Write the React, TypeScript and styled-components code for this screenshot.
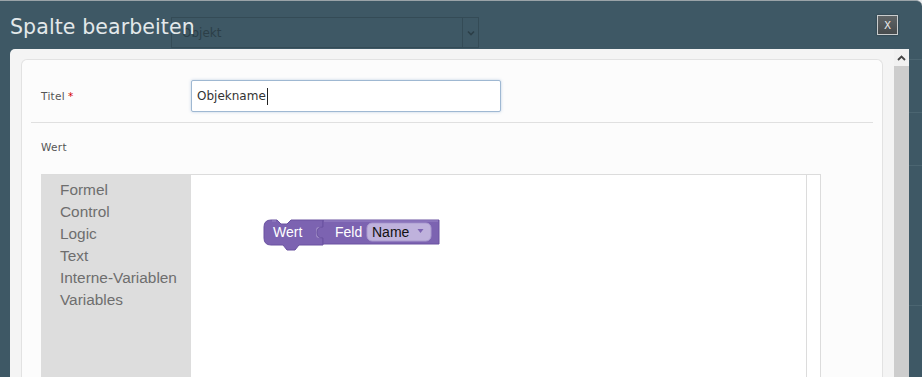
import React from "react";
import styled, { createGlobalStyle } from "styled-components";

const Global = createGlobalStyle`
  html, body { margin: 0; padding: 0; background: #e9ecee; overflow: hidden; }
  #root { width: 922px; height: 377px; }
`;

const Dialog = styled.div`
  width: 922px;
  height: 377px;
  box-sizing: border-box;
  background: #3e5865;
  border-top: 1px solid #9aa3a8;
  border-top-right-radius: 6px;
  display: flex;
  flex-direction: column;
  overflow: hidden;
`;

const Header = styled.div`
  position: relative;
  height: 48px;
  flex: none;
  display: flex;
  align-items: flex-start;
  justify-content: space-between;
  padding: 0 24px 0 10px;
`;

const Title = styled.h1`
  margin: 12px 0 0 0;
  font-family: "DejaVu Sans", sans-serif;
  font-weight: normal;
  font-size: 20.5px;
  letter-spacing: 0.1px;
  color: #e3e8ea;
  line-height: 28px;
  position: relative;
  z-index: 1;
`;

const GhostSelect = styled.div`
  position: absolute;
  left: 171px;
  top: 16px;
  width: 308px;
  height: 31px;
  box-sizing: border-box;
  border: 1px solid #344b56;
  display: flex;
  align-items: center;
  font-family: "DejaVu Sans", sans-serif;
  font-size: 12px;
  color: #2c3f48;
`;

const GhostText = styled.span`
  flex: 1;
  padding-left: 10px;
`;

const GhostArrow = styled.span`
  width: 15px;
  align-self: stretch;
  border-left: 1px solid #344b56;
  display: flex;
  align-items: center;
  justify-content: center;
`;

const CloseBtn = styled.button`
  margin-top: 14px;
  width: 21px;
  height: 20px;
  box-sizing: border-box;
  padding: 0;
  border: 1px solid #c9cccd;
  background: linear-gradient(#5f6466, #474b4d);
  color: #e8e8e8;
  font-family: "DejaVu Sans Mono", monospace;
  font-size: 11px;
  line-height: 17px;
  text-align: center;
  box-shadow: 0 0 2px rgba(0, 0, 0, 0.4);
`;

const Body = styled.div`
  flex: 1;
  display: flex;
  min-height: 0;
`;

const Panel = styled.div`
  flex: 1;
  margin-left: 10px;
  background: #f4f4f4;
  border-top-left-radius: 5px;
  padding: 10px 11px 0 11px;
  display: flex;
  min-height: 0;
`;

const Card = styled.div`
  flex: 1;
  background: #fcfcfc;
  border: 1px solid #e2e2e2;
  border-bottom: none;
  border-radius: 6px 6px 0 0;
  display: flex;
  flex-direction: column;
  min-height: 0;
`;

const FormRow = styled.div`
  display: flex;
  align-items: center;
  padding: 20px 0 10px 19px;
`;

const Label = styled.label`
  width: 150px;
  font-family: "DejaVu Sans", sans-serif;
  font-size: 10.5px;
  color: #555;
  letter-spacing: 0.3px;
`;

const Req = styled.span`
  color: #d40000;
  margin-left: 3px;
`;

const FakeInput = styled.div`
  width: 310px;
  height: 32px;
  box-sizing: border-box;
  border: 1px solid #9fb8d2;
  border-radius: 2px;
  background: #fff;
  box-shadow: 0 0 3px rgba(110, 150, 200, 0.45);
  display: flex;
  align-items: center;
  padding-left: 5px;
  font-family: "DejaVu Sans", sans-serif;
  font-size: 12px;
  color: #333;
`;

const Caret = styled.span`
  display: inline-block;
  width: 1px;
  height: 17px;
  background: #222;
  margin-left: 1px;
`;

const Divider = styled.div`
  height: 1px;
  background: #e0e0e0;
  margin: 0 9px;
`;

const SectionLabel = styled(Label)`
  display: block;
  padding: 17px 0 20px 19px;
  line-height: 14px;
`;

const Workspace = styled.div`
  flex: 1;
  margin-left: 19px;
  width: 780px;
  border-top: 1px solid #dcdcdc;
  display: flex;
  min-height: 0;
`;

const Toolbox = styled.ul`
  width: 150px;
  margin: 0;
  padding: 4px 0 0 19px;
  box-sizing: border-box;
  list-style: none;
  background: #dddddd;
`;

const ToolItem = styled.li`
  font-family: "Liberation Sans", Arial, sans-serif;
  font-size: 15.4px;
  line-height: 22px;
  color: #6e6e6e;
`;

const Canvas = styled.div`
  position: relative;
  flex: 1;
  background: #fff;
`;

const VScroll = styled.div`
  width: 13px;
  border-left: 1px solid #dcdcdc;
  border-right: 1px solid #dcdcdc;
  background: #fff;
`;

const BlockSvg = styled.svg`
  position: absolute;
  left: 72px;
  top: 44px;
`;

const ScrollBar = styled.div`
  width: 15px;
  background: #cdcdcd;
  display: flex;
  flex-direction: column;
`;

const ScrollUp = styled.div`
  height: 17px;
  background: #f1f1f1;
  display: flex;
  align-items: center;
  justify-content: center;
`;

const Strip = styled.div`
  width: 13px;
  display: flex;
  flex-direction: column;
`;

const StripSeg = styled.div<{ $h: number }>`
  height: ${(p) => p.$h}px;
  flex: none;
  border-bottom: 1px solid #4b6571;
  box-sizing: border-box;
`;

const tools = ["Formel", "Control", "Logic", "Text", "Interne-Variablen", "Variables"];

export default function App() {
  return (
    <>
      <Global />
      <Dialog>
        <Header>
          <Title>Spalte bearbeiten</Title>
          <GhostSelect>
            <GhostText>Objekt</GhostText>
            <GhostArrow>
              <svg width="8" height="6" viewBox="0 0 8 6">
                <path d="M1 1.5 L4 4.5 L7 1.5" stroke="#2c3f48" strokeWidth="1.6" fill="none" />
              </svg>
            </GhostArrow>
          </GhostSelect>
          <CloseBtn>X</CloseBtn>
        </Header>
        <Body>
          <Panel>
            <Card>
              <FormRow>
                <Label>
                  Titel<Req>*</Req>
                </Label>
                <FakeInput>
                  Objekname
                  <Caret />
                </FakeInput>
              </FormRow>
              <Divider />
              <SectionLabel>Wert</SectionLabel>
              <Workspace>
                <Toolbox>
                  {tools.map((t) => (
                    <ToolItem key={t}>{t}</ToolItem>
                  ))}
                </Toolbox>
                <Canvas>
                  <BlockSvg width="182" height="36" viewBox="0 0 182 36">
                    <path
                      d="M8 1 H14 L18 5 H24 L28 1 H60 V26 H36 L32 31 H24 L20 26 H8 Q1 26 1 19 V8 Q1 1 8 1 Z"
                      fill="#7c63b1"
                      stroke="#6a52a0"
                      strokeWidth="1"
                    />
                    <path d="M60 8 H56 Q53 8 53 11 V16 Q53 19 56 19 H60" fill="#fff" opacity="0.25" />
                    <path
                      d="M60 1 H176 V25 H60 V19 Q54 19 54 13.5 Q54 8 60 8 Z"
                      fill="#7c63b1"
                      stroke="#6a52a0"
                      strokeWidth="1"
                    />
                    <path d="M61 2 H175" stroke="#9a86c8" strokeWidth="1" />
                    <path d="M9 2 H13" stroke="#9a86c8" strokeWidth="1" />
                    <text x="10" y="18" fontFamily="Liberation Sans, Arial, sans-serif" fontSize="14" fill="#fff">
                      Wert
                    </text>
                    <text x="72" y="18" fontFamily="Liberation Sans, Arial, sans-serif" fontSize="14" fill="#fff">
                      Feld
                    </text>
                    <rect x="104" y="4" width="64" height="18" rx="5" fill="#bfb2dc" stroke="#a999cf" strokeWidth="1" />
                    <text x="109" y="18" fontFamily="Liberation Sans, Arial, sans-serif" fontSize="14" fill="#111">
                      Name
                    </text>
                    <path d="M154.5 10 H160.5 L157.5 14 Z" fill="#7c63b1" />
                  </BlockSvg>
                </Canvas>
                <VScroll />
              </Workspace>
            </Card>
          </Panel>
          <ScrollBar>
            <ScrollUp>
              <svg width="9" height="6" viewBox="0 0 9 6">
                <path d="M1 5 L4.5 1.5 L8 5" stroke="#444" strokeWidth="1.8" fill="none" />
              </svg>
            </ScrollUp>
          </ScrollBar>
          <Strip>
            <StripSeg $h={11} />
            <StripSeg $h={53} />
            <StripSeg $h={53} />
            <StripSeg $h={140} />
          </Strip>
        </Body>
      </Dialog>
    </>
  );
}
